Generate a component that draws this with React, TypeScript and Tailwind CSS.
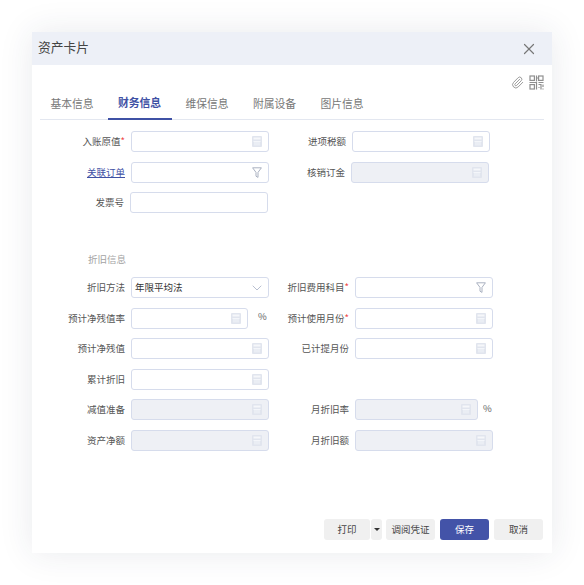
import React from 'react';
import { ChevronDown, Paperclip, X } from 'lucide-react';

const tabs = ['基本信息', '财务信息', '维保信息', '附属设备', '图片信息'];

function CalcIcon() {
  return (
    <svg width="10" height="11" viewBox="0 0 10 11" className="shrink-0">
      <rect width="10" height="11" rx="1" fill="#e1e5ee" />
      <rect x="1.5" y="1.5" width="7" height="2" fill="#f6f7fa" />
      <path d="M1.5 5.5h7M3 6v3.5M5 6v3.5M7 6v3.5" stroke="#f6f7fa" strokeWidth="0.9" />
    </svg>
  );
}

function FilterIcon() {
  return (
    <svg width="10" height="11" viewBox="0 0 10 11" fill="none" stroke="#aab1c0" strokeWidth="1" className="shrink-0">
      <path d="M0.6 0.8h8.8L6 5.4v5L4 9.2V5.4z" strokeLinejoin="round" />
    </svg>
  );
}

function QrIcon() {
  return (
    <svg width="15" height="15" viewBox="0 0 15 15" fill="none" stroke="#8f8f8f" strokeWidth="1.2">
      <rect x="1" y="1" width="4.4" height="4.4" />
      <rect x="9.6" y="1" width="4.4" height="4.4" />
      <rect x="1" y="9.6" width="4.4" height="4.4" />
      <path d="M7.5 0.5v6M0.5 7.5h7v7M7.5 3h2M9.5 7.5h5M9.5 9.5h2.5v5M14 9.5v2.5M14 13.5v1M9.5 12.5h1" />
    </svg>
  );
}

type BoxProps = {
  width?: string;
  disabled?: boolean;
  icon?: 'calc' | 'filter' | 'none';
};

function Box({ width = 'w-[138px]', disabled, icon = 'calc' }: BoxProps) {
  return (
    <div
      className={`${width} h-[21px] flex items-center justify-end pr-[6px] rounded-[3px] border border-[#d6dcec] ${
        disabled ? 'bg-[#eef0f5]' : 'bg-white'
      }`}
    >
      {icon === 'calc' && <CalcIcon />}
      {icon === 'filter' && <FilterIcon />}
    </div>
  );
}

function Label({ width, required, link, children }: { width: string; required?: boolean; link?: boolean; children: React.ReactNode }) {
  return (
    <div className={`${width} shrink-0 pr-[6px] text-right text-[9.5px] leading-[21px] whitespace-nowrap ${link ? 'text-[#3f51a5] underline' : 'text-[#555]'}`}>
      {children}
      {required && <span className="text-[#ef4444]">*</span>}
    </div>
  );
}

function Percent() {
  return <span className="ml-[10px] mb-[3px] text-[9.5px] text-[#666]">%</span>;
}

export default function App() {
  return (
    <div className="w-[584px] h-[585px] p-[32px] bg-white" style={{ fontFamily: '"Noto Sans CJK SC", "Liberation Sans", sans-serif' }}>
      <div className="w-[520px] h-[521px] flex flex-col bg-white shadow-[0_0_32px_rgba(40,50,80,0.10)]">
        {/* 标题栏 */}
        <div className="h-[33px] shrink-0 flex items-center justify-between pl-[6px] pr-[14px] bg-[#edf0f7]">
          <span className="mb-[3px] text-[12.75px] text-[#444]">资产卡片</span>
          <X className="w-[18px] h-[18px] text-[#777]" strokeWidth={1.6} />
        </div>

        {/* 附件 / 二维码 */}
        <div className="h-[19px] mt-[8px] flex items-center justify-end gap-[5px] pr-[8px]">
          <Paperclip className="w-[13px] h-[13px] text-[#999]" strokeWidth={1.8} />
          <QrIcon />
        </div>

        {/* 页签 */}
        <div className="mx-[8px] h-[28px] flex gap-[3.5px] border-b border-[#e3e7f0]">
          {tabs.map((t, i) => (
            <div
              key={t}
              className={`w-[64px] h-[28px] pb-[6px] flex items-center justify-center text-[10.8px] ${
                i === 1 ? 'font-bold text-[#3f51a5] border-b-2 border-[#3f51a5]' : 'text-[#777]'
              }`}
            >
              {t}
            </div>
          ))}
        </div>

        {/* 表单 */}
        <div className="pt-[11px] pl-[8px] flex flex-col gap-[9.5px]">
          <div className="flex">
            <Label width="w-[91px]" required>入账原值</Label>
            <Box />
            <Label width="w-[83px]">进项税额</Label>
            <Box />
          </div>
          <div className="flex">
            <Label width="w-[91px]" link>关联订单</Label>
            <Box icon="filter" />
            <Label width="w-[82px]">核销订金</Label>
            <Box disabled />
          </div>
          <div className="flex">
            <Label width="w-[90px]">发票号</Label>
            <Box icon="none" />
          </div>
        </div>

        <div className="mt-[39px] h-[14px] pl-[56px] text-[9.5px] leading-[14px] text-[#a3a3a3]">折旧信息</div>

        <div className="mt-[11px] pl-[8px] flex flex-col gap-[9.6px]">
          <div className="flex">
            <Label width="w-[91px]">折旧方法</Label>
            <div className="w-[138px] h-[21px] flex items-center justify-between pl-[3px] pr-[3px] rounded-[3px] border border-[#d6dcec] bg-white">
              <span className="text-[9.5px] text-[#333]">年限平均法</span>
              <ChevronDown className="w-[16px] h-[16px] text-[#a6aec4]" strokeWidth={1.2} />
            </div>
            <Label width="w-[86px]" required>折旧费用科目</Label>
            <Box icon="filter" />
          </div>
          <div className="flex">
            <Label width="w-[91px]">预计净残值率</Label>
            <div className="w-[138px] flex items-center">
              <Box width="w-[117px]" />
              <Percent />
            </div>
            <Label width="w-[86px]" required>预计使用月份</Label>
            <Box />
          </div>
          <div className="flex">
            <Label width="w-[91px]">预计净残值</Label>
            <Box />
            <Label width="w-[86px]">已计提月份</Label>
            <Box />
          </div>
          <div className="flex">
            <Label width="w-[91px]">累计折旧</Label>
            <Box />
          </div>
          <div className="flex">
            <Label width="w-[91px]">减值准备</Label>
            <Box disabled />
            <Label width="w-[86px]">月折旧率</Label>
            <div className="w-[138px] flex items-center">
              <Box width="w-[123px]" disabled />
              <span className="ml-[5px] mb-[3px] text-[9.5px] text-[#666]">%</span>
            </div>
          </div>
          <div className="flex">
            <Label width="w-[91px]">资产净额</Label>
            <Box disabled />
            <Label width="w-[86px]">月折旧额</Label>
            <Box disabled />
          </div>
        </div>

        {/* 底部按钮 */}
        <div className="mt-auto mb-[13px] pr-[9px] flex justify-end items-center text-[9.5px]">
          <button className="w-[46px] h-[21px] rounded-[3px] bg-[#f0f0f0] text-[#444]">打印</button>
          <button className="ml-[1px] w-[11px] h-[21px] rounded-[3px] bg-[#f0f0f0] flex items-center justify-center">
            <span className="w-0 h-0 border-x-[3px] border-x-transparent border-t-[3px] border-t-[#333]" />
          </button>
          <button className="ml-[4px] w-[49px] h-[21px] rounded-[3px] bg-[#f0f0f0] text-[#444]">调阅凭证</button>
          <button className="ml-[5px] w-[49px] h-[21px] rounded-[3px] bg-[#4353a8] text-white">保存</button>
          <button className="ml-[5px] w-[49px] h-[21px] rounded-[3px] bg-[#f0f0f0] text-[#444]">取消</button>
        </div>
      </div>
    </div>
  );
}
